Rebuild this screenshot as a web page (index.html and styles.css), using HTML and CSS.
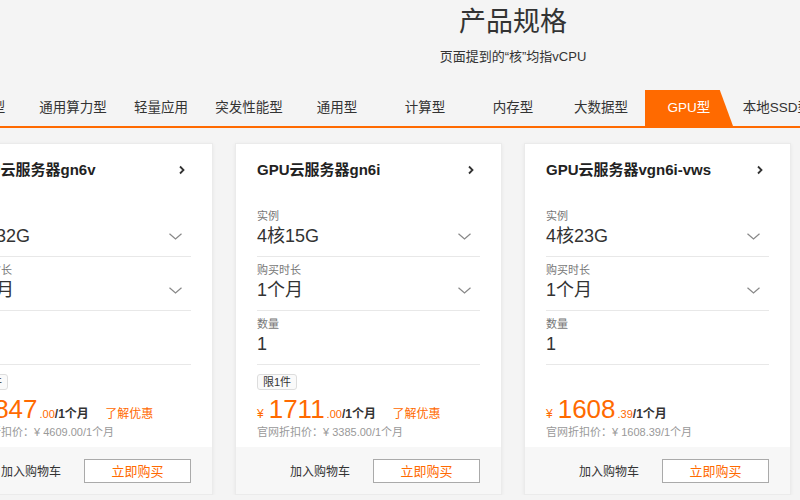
FILE: index.html
```html
<!DOCTYPE html>
<html lang="zh-CN">
<head>
    <meta charset="UTF-8">
    <meta name="viewport" content="width=device-width, initial-scale=1.0">
    <title>产品规格</title>
    <link rel="stylesheet" href="styles.css">
</head>
<body>
    <div class="page">
        <h1 class="page-title">产品规格</h1>
        <p class="page-sub">页面提到的“核”均指vCPU</p>

        <div class="tabs">
            <a href="#" class="tab">共享型</a>
            <a href="#" class="tab">通用算力型</a>
            <a href="#" class="tab">轻量应用</a>
            <a href="#" class="tab">突发性能型</a>
            <a href="#" class="tab">通用型</a>
            <a href="#" class="tab">计算型</a>
            <a href="#" class="tab">内存型</a>
            <a href="#" class="tab">大数据型</a>
            <a href="#" class="tab active">GPU型</a>
            <a href="#" class="tab">本地SSD型</a>
            <a href="#" class="tab">高主频型</a>
            <a href="#" class="tab">增强型</a>
            <a href="#" class="tab">裸金属</a>
        </div>

        <div class="cards">
            <!-- card 1 -->
            <div class="card">
                <div class="card-body">
                    <div class="card-title">
                        <span>GPU云服务器gn6v</span>
                        <svg class="arrow-right" width="6" height="10" viewBox="0 0 6 10"><polyline points="1,1.5 4.5,5 1,8.5" /></svg>
                    </div>
                    <div class="field">
                        <div class="field-label">实例</div>
                        <div class="field-value">
                            <span>8核32G</span>
                            <svg class="arrow-down" width="13" height="7" viewBox="0 0 13 7"><polyline points="0.5,0.8 6.5,6 12.5,0.8" /></svg>
                        </div>
                    </div>
                    <div class="field">
                        <div class="field-label">购买时长</div>
                        <div class="field-value">
                            <span>1个月</span>
                            <svg class="arrow-down" width="13" height="7" viewBox="0 0 13 7"><polyline points="0.5,0.8 6.5,6 12.5,0.8" /></svg>
                        </div>
                    </div>
                    <div class="field">
                        <div class="field-label">数量</div>
                        <div class="field-value"><span>1</span></div>
                    </div>
                    <div class="badge-row"><span class="badge">限1件</span></div>
                    <div class="price">
                        <span class="yen">¥</span><span class="amount">1847</span><span class="cents">.00</span><span class="per">/1个月</span>
                        <a href="#" class="promo">了解优惠</a>
                    </div>
                    <div class="list-price">官网折扣价：¥ 4609.00/1个月</div>
                </div>
                <div class="card-foot">
                    <a href="#" class="cart">加入购物车</a>
                    <button class="buy">立即购买</button>
                </div>
            </div>

            <!-- card 2 -->
            <div class="card">
                <div class="card-body">
                    <div class="card-title">
                        <span>GPU云服务器gn6i</span>
                        <svg class="arrow-right" width="6" height="10" viewBox="0 0 6 10"><polyline points="1,1.5 4.5,5 1,8.5" /></svg>
                    </div>
                    <div class="field">
                        <div class="field-label">实例</div>
                        <div class="field-value">
                            <span>4核15G</span>
                            <svg class="arrow-down" width="13" height="7" viewBox="0 0 13 7"><polyline points="0.5,0.8 6.5,6 12.5,0.8" /></svg>
                        </div>
                    </div>
                    <div class="field">
                        <div class="field-label">购买时长</div>
                        <div class="field-value">
                            <span>1个月</span>
                            <svg class="arrow-down" width="13" height="7" viewBox="0 0 13 7"><polyline points="0.5,0.8 6.5,6 12.5,0.8" /></svg>
                        </div>
                    </div>
                    <div class="field">
                        <div class="field-label">数量</div>
                        <div class="field-value"><span>1</span></div>
                    </div>
                    <div class="badge-row"><span class="badge">限1件</span></div>
                    <div class="price">
                        <span class="yen">¥</span><span class="amount">1711</span><span class="cents">.00</span><span class="per">/1个月</span>
                        <a href="#" class="promo">了解优惠</a>
                    </div>
                    <div class="list-price">官网折扣价：¥ 3385.00/1个月</div>
                </div>
                <div class="card-foot">
                    <a href="#" class="cart">加入购物车</a>
                    <button class="buy">立即购买</button>
                </div>
            </div>

            <!-- card 3 -->
            <div class="card">
                <div class="card-body">
                    <div class="card-title">
                        <span>GPU云服务器vgn6i-vws</span>
                        <svg class="arrow-right" width="6" height="10" viewBox="0 0 6 10"><polyline points="1,1.5 4.5,5 1,8.5" /></svg>
                    </div>
                    <div class="field">
                        <div class="field-label">实例</div>
                        <div class="field-value">
                            <span>4核23G</span>
                            <svg class="arrow-down" width="13" height="7" viewBox="0 0 13 7"><polyline points="0.5,0.8 6.5,6 12.5,0.8" /></svg>
                        </div>
                    </div>
                    <div class="field">
                        <div class="field-label">购买时长</div>
                        <div class="field-value">
                            <span>1个月</span>
                            <svg class="arrow-down" width="13" height="7" viewBox="0 0 13 7"><polyline points="0.5,0.8 6.5,6 12.5,0.8" /></svg>
                        </div>
                    </div>
                    <div class="field">
                        <div class="field-label">数量</div>
                        <div class="field-value"><span>1</span></div>
                    </div>
                    <div class="badge-row"></div>
                    <div class="price">
                        <span class="yen">¥</span><span class="amount">1608</span><span class="cents">.39</span><span class="per">/1个月</span>
                    </div>
                    <div class="list-price">官网折扣价：¥ 1608.39/1个月</div>
                </div>
                <div class="card-foot">
                    <a href="#" class="cart">加入购物车</a>
                    <button class="buy">立即购买</button>
                </div>
            </div>

            <!-- card 4 -->
            <div class="card">
                <div class="card-body">
                    <div class="card-title">
                        <span>GPU云服务器gn7i</span>
                        <svg class="arrow-right" width="6" height="10" viewBox="0 0 6 10"><polyline points="1,1.5 4.5,5 1,8.5" /></svg>
                    </div>
                    <div class="field">
                        <div class="field-label">实例</div>
                        <div class="field-value">
                            <span>16核60G</span>
                            <svg class="arrow-down" width="13" height="7" viewBox="0 0 13 7"><polyline points="0.5,0.8 6.5,6 12.5,0.8" /></svg>
                        </div>
                    </div>
                    <div class="field">
                        <div class="field-label">购买时长</div>
                        <div class="field-value">
                            <span>1个月</span>
                            <svg class="arrow-down" width="13" height="7" viewBox="0 0 13 7"><polyline points="0.5,0.8 6.5,6 12.5,0.8" /></svg>
                        </div>
                    </div>
                    <div class="field">
                        <div class="field-label">数量</div>
                        <div class="field-value"><span>1</span></div>
                    </div>
                    <div class="badge-row"></div>
                    <div class="price">
                        <span class="yen">¥</span><span class="amount">5260</span><span class="cents">.00</span><span class="per">/1个月</span>
                    </div>
                    <div class="list-price">官网折扣价：¥ 5260.00/1个月</div>
                </div>
                <div class="card-foot">
                    <a href="#" class="cart">加入购物车</a>
                    <button class="buy">立即购买</button>
                </div>
            </div>
        </div>
    </div>
</body>
</html>
```

FILE: styles.css
```css
html, body {
    overflow: hidden;
}
body {
    margin: 0;
    font-family: "Liberation Sans", "Noto Sans CJK SC", sans-serif;
    background-color: #f4f4f4;
    color: #333;
}
a {
    text-decoration: none;
}

/* the page is wider than the window, centred at x=513 */
.page {
    width: 1140px;
    margin-left: -57px;
    padding-top: 7px;
}
.page-title {
    margin: 0;
    font-size: 27px;
    font-weight: normal;
    line-height: 30px;
    text-align: center;
    color: #333;
}
.page-sub {
    margin: 11px 0 0;
    font-size: 13px;
    line-height: 18px;
    text-align: center;
    color: #333;
}

.tabs {
    display: flex;
    justify-content: center;
    margin-top: 24px;
    border-bottom: 2px solid #ff6a00;
}
.tab {
    flex: none;
    width: 88px;
    height: 36px;
    line-height: 36px;
    text-align: center;
    font-size: 13.5px;
    color: #333;
}
.tab.active {
    background-color: #ff6a00;
    color: #fff;
    clip-path: polygon(0 0, 85% 0, 100% 100%, 0 100%);
}

.cards {
    display: flex;
    justify-content: center;
    gap: 22px;
    margin-top: 15px;
}
.card {
    flex: none;
    width: 267px;
    height: 352px;
    box-sizing: border-box;
    display: flex;
    flex-direction: column;
    background-color: #fff;
    border: 1px solid #ebebeb;
    box-shadow: 0 1px 4px rgba(0, 0, 0, 0.06);
}
.card-body {
    padding: 16px 21px 0;
}
.card-title {
    display: flex;
    justify-content: space-between;
    align-items: center;
    padding-right: 6px;
    margin-bottom: 23px;
    font-size: 15px;
    font-weight: bold;
    line-height: 20px;
    color: #222;
}
.arrow-right polyline {
    fill: none;
    stroke: #333;
    stroke-width: 1.8;
}

.field {
    padding: 6px 0 9px;
    border-bottom: 1px solid #e8e8e8;
}
.field-label {
    font-size: 11px;
    line-height: 14px;
    color: #777;
}
.field-value {
    display: flex;
    justify-content: space-between;
    align-items: center;
    margin-top: 2px;
    padding-right: 9px;
    font-size: 18px;
    line-height: 22px;
    color: #333;
}
.arrow-down polyline {
    fill: none;
    stroke: #888;
    stroke-width: 1.2;
}

.badge-row {
    height: 16px;
    margin-top: 7px;
}
.badge {
    display: inline-block;
    height: 16px;
    box-sizing: border-box;
    padding: 0 5px;
    border: 1px solid #ddd;
    border-radius: 3px;
    background-color: #fafafa;
    font-size: 11px;
    line-height: 14px;
    color: #333;
}

.price {
    margin-top: 10px;
    line-height: 22px;
    white-space: nowrap;
    color: #ff6a00;
}
.price .yen {
    font-size: 12px;
    margin-right: 5px;
}
.price .amount {
    font-size: 26px;
}
.price .cents {
    font-size: 11px;
    margin-left: 2px;
}
.price .per {
    font-size: 12px;
    font-weight: bold;
    color: #333;
}
.price .promo {
    margin-left: 12px;
    font-size: 12px;
    color: #ff6a00;
}
.list-price {
    font-size: 11px;
    line-height: 14px;
    color: #999;
    white-space: nowrap;
}

.card-foot {
    margin-top: auto;
    height: 47px;
    display: flex;
    justify-content: flex-end;
    align-items: center;
    gap: 23px;
    padding-right: 21px;
    background-color: #f7f7f7;
}
.cart {
    font-size: 12px;
    color: #333;
}
.buy {
    width: 107px;
    height: 24px;
    padding: 0;
    border: 1px solid #aaa;
    background-color: #fff;
    font-family: inherit;
    font-size: 13px;
    color: #ff6a00;
    cursor: pointer;
}
```
